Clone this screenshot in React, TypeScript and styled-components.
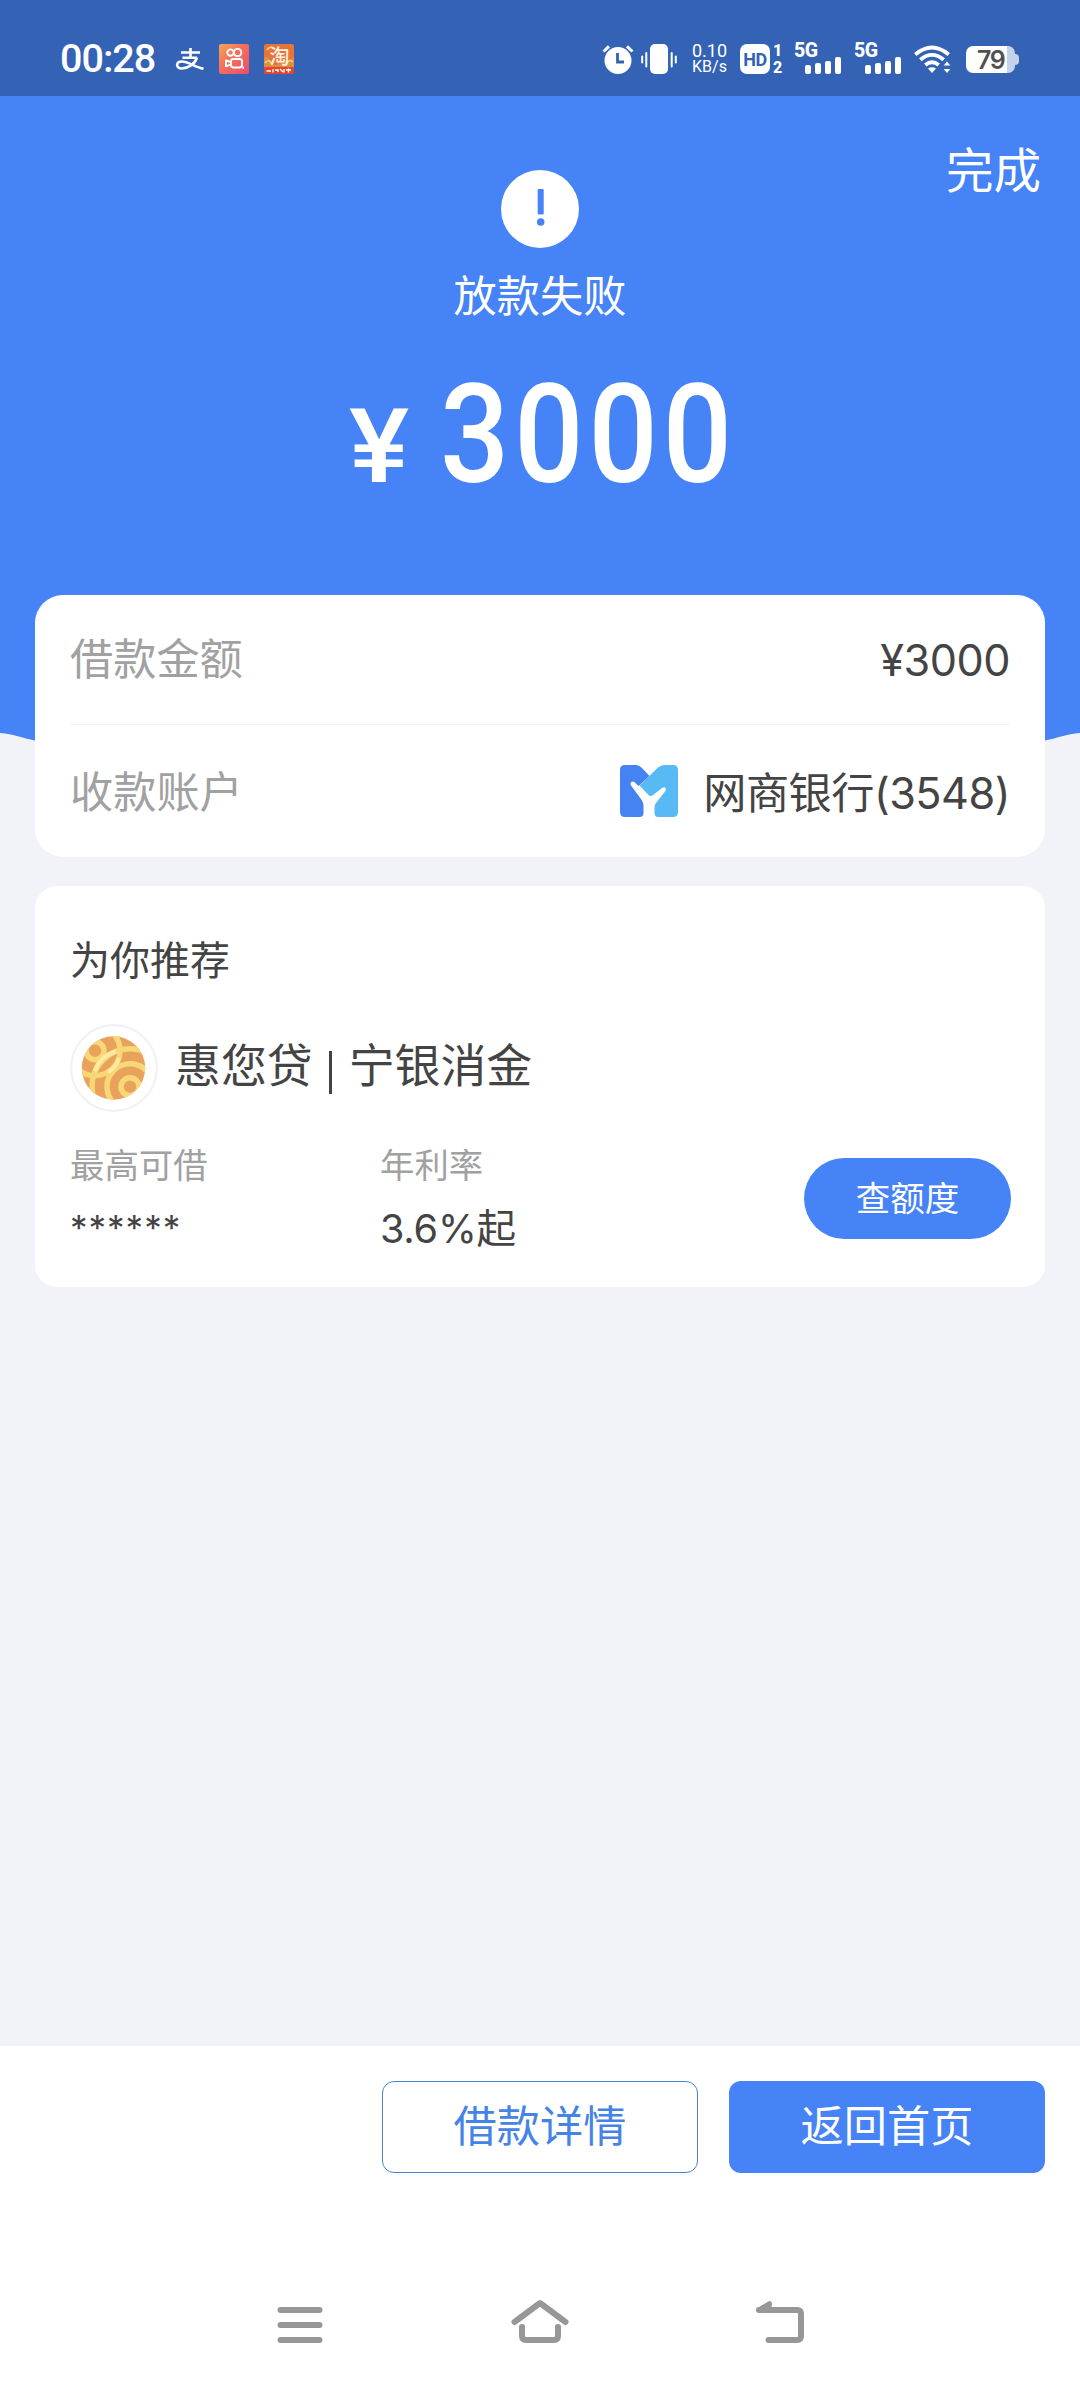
import React from "react";
import styled, { createGlobalStyle } from "styled-components";

const BLUE = "#4583f6";
const STATUS = "#3462b5";
const INK = "#444444";
const MUTED = "#a1a1a1";

const GlobalStyle = createGlobalStyle`
  * { box-sizing: border-box; }
  body {
    margin: 0;
    background: #f2f3f8;
    font-family: Inter, "Noto Sans CJK SC", sans-serif;
    color: ${INK};
  }
  svg { display: block; flex: none; overflow: visible; }
`;

const Screen = styled.div`
  width: 1080px;
  height: 2388px;
  display: flex;
  flex-direction: column;
  background: #f2f3f8;
  overflow: hidden;
`;

const StatusBar = styled.header`
  height: 96px;
  flex: none;
  display: flex;
  justify-content: space-between;
  background: ${STATUS};
  color: #fff;
  padding: 0 61px 0 60px;
`;

const StatusGroup = styled.div`
  display: flex;
  align-items: center;
  padding-top: 22px;
`;

const Clock = styled.span`
  width: 100px;
  font: 500 39.5px/44px Roboto, sans-serif;
  letter-spacing: -1px;
`;

const AppIcons = styled.div`
  display: flex;
  align-items: center;
  gap: 15px;
  margin-left: 16px;
`;

const Speed = styled.div`
  width: 37px;
  display: flex;
  flex-direction: column;
  align-items: center;
  font: 400 18px/16px Roboto, sans-serif;
  white-space: nowrap;
`;

const SpeedUnit = styled.span`
  font-size: 16px;
  line-height: 16px;
`;

const Hd = styled.div`
  display: flex;
  gap: 2px;
`;

const HdBox = styled.div`
  width: 30px;
  height: 30px;
  border-radius: 7px;
  background: #fff;
  color: ${STATUS};
  text-align: center;
  font: 700 18px/31px Roboto, sans-serif;
  letter-spacing: -0.5px;
`;

const HdSims = styled.div`
  width: 11px;
  height: 30px;
  display: flex;
  flex-direction: column;
  align-items: center;
  justify-content: center;
  font: 800 16px/17px Roboto, sans-serif;
`;

const SignalBox = styled.div`
  width: 48px;
  height: 30px;
  display: flex;
  flex-direction: column;
`;

const SignalLabel = styled.span`
  height: 13px;
  font: 800 19.5px/14px Roboto, sans-serif;
  letter-spacing: -0.4px;
`;

const Bars = styled.div`
  display: flex;
  align-items: flex-end;
  align-self: flex-end;
  height: 17px;
  gap: 4px;
  padding-right: 1px;
`;

const Bar = styled.i<{ $h: number }>`
  width: 6px;
  height: ${(p) => p.$h}px;
  border-radius: 2px;
  background: #fff;
`;

const Battery = styled.div`
  display: flex;
  align-items: center;
`;

const BatteryBody = styled.div`
  width: 49px;
  height: 27px;
  border-radius: 7px;
  background: linear-gradient(90deg, #fff 41px, #c4d2ea 41px);
  color: #505050;
  font: 600 25px/28px Inter, sans-serif;
  letter-spacing: -1.5px;
  padding-left: 11px;
`;

const BatteryTip = styled.i`
  width: 4px;
  height: 11px;
  border-radius: 0 4px 4px 0;
  background: #c4d2ea;
`;

const Hero = styled.section`
  height: 637px;
  flex: none;
  display: flex;
  flex-direction: column;
  align-items: center;
  background: ${BLUE};
  color: #fff;
`;

const HeroTop = styled.div`
  width: 100%;
  height: 152px;
  display: grid;
  grid-template-columns: 1fr 78px 1fr;
  padding: 0 39px;
`;

const Alert = styled.div`
  grid-column: 2;
  padding-top: 74px;
`;

const Done = styled.button`
  justify-self: end;
  align-self: start;
  margin: 45px 0 0;
  padding: 0;
  border: 0;
  background: none;
  color: inherit;
  font: 400 47.5px/60px Inter, "Noto Sans CJK SC", sans-serif;
`;

const HeroTitle = styled.h1`
  margin: 18px 0 0;
  font-size: 43.2px;
  line-height: 60px;
  font-weight: 400;
`;

const Amount = styled.div`
  display: flex;
  align-items: baseline;
  justify-content: center;
  margin-top: 39px;
  height: 140px;
  font-family: Roboto, sans-serif;
  font-weight: 500;
  line-height: 140px;
`;

const Currency = styled.span`
  width: 62px;
  font-size: 103px;
  margin-right: 29px;
  transform: scaleX(1.1);
  transform-origin: 0 50%;
`;

const Figure = styled.span`
  width: 292px;
  font-size: 137px;
  letter-spacing: 5.6px;
  transform: scaleX(0.89);
  transform-origin: 0 50%;
  white-space: nowrap;
`;

const Curve = styled.svg`
  margin-bottom: -168px;
`;

const Cards = styled.main`
  position: relative;
  flex: 1;
  display: flex;
  flex-direction: column;
  gap: 29px;
  padding: 0 35px;
`;

const Card = styled.section<{ $radius: number }>`
  background: #fff;
  border-radius: ${(p) => p.$radius}px;
  padding: 0 35px;
`;

const Row = styled.div<{ $h: number; $shift: number }>`
  height: ${(p) => p.$h}px;
  display: flex;
  align-items: center;
  justify-content: space-between;
  padding-top: ${(p) => p.$shift}px;
  font-size: 43.2px;
  line-height: 60px;
  & + & {
    border-top: 1px solid #eeeff2;
  }
`;

const Label = styled.span`
  color: ${MUTED};
  margin-top: -2px;
`;

const Value = styled.span`
  display: flex;
  align-items: center;
  gap: 25px;
  letter-spacing: -0.5px;
  white-space: nowrap;
`;

const BankMark = styled.svg`
  margin-top: -3px;
`;

const SectionTitle = styled.h2`
  margin: 0;
  padding-top: 49px;
  font-size: 40px;
  line-height: 52px;
  font-weight: 400;
`;

const Product = styled.div`
  display: flex;
  align-items: center;
  gap: 17px;
  margin-top: 37px;
`;

const ProductName = styled.span`
  font-size: 45.9px;
  line-height: 60px;
  margin-top: -5px;
  white-space: nowrap;
`;

const Pipe = styled.i`
  display: inline-block;
  width: 3px;
  height: 43px;
  margin: 0 17px 0 16px;
  vertical-align: -12px;
  background: ${INK};
`;

const Offer = styled.div`
  display: grid;
  grid-template-columns: 310px 1fr 207px;
  align-items: center;
  margin-top: 30px;
  padding-bottom: 32px;
  margin-right: -1px;
`;

const Stat = styled.div`
  display: flex;
  flex-direction: column;
`;

const StatLabel = styled.span`
  color: ${MUTED};
  font-size: 34.4px;
  line-height: 48px;
`;

const StatValue = styled.span<{ $stars?: boolean }>`
  font-size: ${(p) => (p.$stars ? 35 : 39.6)}px;
  line-height: ${(p) => (p.$stars ? 50 : 52)}px;
  margin-top: 13px;
  letter-spacing: ${(p) => (p.$stars ? "1px" : "-0.2px")};
  height: 52px;
`;

const Check = styled.button`
  height: 81px;
  padding: 0;
  border: 0;
  border-radius: 41px;
  background: ${BLUE};
  color: #fff;
  font: 400 34.5px/81px Inter, "Noto Sans CJK SC", sans-serif;
`;

const Footer = styled.footer`
  height: 216px;
  flex: none;
  display: flex;
  justify-content: flex-end;
  gap: 31px;
  padding: 35px 35px 0;
  background: #fff;
`;

const Action = styled.button<{ $primary?: boolean }>`
  width: 316px;
  height: 92px;
  padding: 0 0 2px;
  border-radius: 12px;
  border: ${(p) => (p.$primary ? "0" : "1px solid #4a82cf")};
  background: ${(p) => (p.$primary ? BLUE : "#fff")};
  color: ${(p) => (p.$primary ? "#fff" : "#4583e6")};
  font: 400 43.2px/60px Inter, "Noto Sans CJK SC", sans-serif;
`;

const NavBar = styled.nav`
  height: 126px;
  flex: none;
  display: grid;
  grid-template-columns: repeat(3, 240px);
  justify-content: center;
  justify-items: center;
  padding-top: 33px;
  background: #fff;
`;

const Spacer = styled.i<{ $w: number }>`
  width: ${(p) => p.$w}px;
  flex: none;
`;

function AlipayIcon() {
  return (
    <svg width="28" height="30" viewBox="0 0 28 30" fill="none" stroke="#fff" strokeWidth="2.6">
      <path d="M5 8.500H24M14.500 4V14M6.500 13.800H21" />
      <path d="M21 13.500C19 20 12 24.500 6 24.500C-.5 24.500-.5 17.500 6 17.500C12 17.500 19 23 27.500 24.800" />
    </svg>
  );
}

function KuaishouIcon() {
  return (
    <svg width="30" height="30" viewBox="0 0 30 30">
      <defs>
        <linearGradient id="ks" x1="0" y1="0" x2="1" y2="1">
          <stop offset="0" stopColor="#f5a35a" />
          <stop offset=".45" stopColor="#f3705c" />
          <stop offset="1" stopColor="#ec4c6c" />
        </linearGradient>
      </defs>
      <rect width="30" height="30" rx="2" fill="url(#ks)" />
      <g fill="none" stroke="#fff" strokeWidth="1.9">
        <circle cx="11.5" cy="8.6" r="3.2" />
        <circle cx="18.6" cy="8.6" r="3.7" />
        <rect x="12" y="15" width="11" height="8.5" rx="2.4" />
        <path d="M11.500 18L7 16.300V22.300L11.500 20.600" strokeLinejoin="round" />
      </g>
      <path d="M24.500 22.500L24 25" stroke="#fff" strokeWidth="1.4" />
    </svg>
  );
}

function TaobaoIcon() {
  return (
    <svg width="30" height="30" viewBox="0 0 30 30">
      <rect width="30" height="30" rx="2" fill="#e8733a" />
      <path d="M0 14Q5 11 7 17T14 20T22 17T30 13V24H0Z" fill="#d9913f" />
      <path d="M1 19Q5 14 8 20M22 21Q25 14 29 18M3 6Q5 3 8 3" stroke="#f8cf7c" strokeWidth="1.5" fill="none" />
      <rect y="23" width="30" height="7" rx="1" fill="#e5452f" />
      <text x="15.500" y="19.500" fontSize="20" fontWeight="500" fill="#fff3e2" textAnchor="middle" fontFamily="Noto Sans CJK SC">淘</text>
      <path d="M2.500 27H7M9 25V28.500M11 26H14V28M16 25L19 28M20 25V28.500M22 26H27M24.500 24.500V28.500" stroke="#fff" strokeWidth="1.300" fill="none" />
    </svg>
  );
}

function AlarmIcon() {
  return (
    <svg width="32" height="30" viewBox="0 0 32 30">
      <circle cx="16" cy="16.500" r="13.500" fill="#fff" />
      <path d="M1.500 7.500L7 2.300M25 2.300L30.500 7.500" stroke="#fff" strokeWidth="3" />
      <path d="M15.500 9V18H22" stroke={STATUS} strokeWidth="2.800" fill="none" />
    </svg>
  );
}

function VibrateIcon() {
  return (
    <svg width="36" height="30" viewBox="0 0 36 30" fill="#fff">
      <rect x="9" width="18" height="30" rx="5" />
      <path d="M1.200 12.500V18.500M5.300 9V22.500M30.700 9V22.500M34.800 12.500V18.500" stroke="#fff" strokeWidth="2" strokeLinecap="round" />
    </svg>
  );
}

function WifiIcon() {
  return (
    <svg width="36" height="30" viewBox="0 0 36 30">
      <g fill="none" stroke="#fff" strokeWidth="3.800">
        <path d="M1.300 10.500Q18-3.500 34.700 10.500" />
        <path d="M6.300 15.800Q18 6 29.700 15.800" />
        <path d="M11.300 21Q18 15.500 24.700 21" />
      </g>
      <path d="M14 24.500Q18 22 22 24.500L18 29Z" fill="#fff" />
      <path d="M29.700 21.500L33 17.500L36.300 21.500ZM29.700 25H36.300L33 29Z" fill="#fff" />
    </svg>
  );
}

function Signal() {
  return (
    <SignalBox>
      <SignalLabel>5G</SignalLabel>
      <Bars>
        {[9, 11, 13.5, 17].map((h) => (
          <Bar key={h} $h={h} />
        ))}
      </Bars>
    </SignalBox>
  );
}

function AlertIcon() {
  return (
    <svg width="78" height="78" viewBox="0 0 78 78">
      <circle cx="39" cy="39" r="39" fill="#fff" />
      <rect x="36.700" y="19" width="6" height="25.500" rx="1" fill={BLUE} />
      <circle cx="39.700" cy="52" r="3.800" fill={BLUE} />
    </svg>
  );
}

function BankLogo() {
  return (
    <BankMark width="58" height="52" viewBox="0 0 58 52">
      <path d="M5 0H16Q19 0 22 3L29.500 11L18.500 21L15 17.500Q12.500 15.500 10.500 18Q10 19 11 20.500L21 34Q23.500 37.500 23.500 41V48Q23.500 52 19.500 52H5Q0 52 0 47V5Q0 0 5 0Z" fill="#4583f2" />
      <path d="M53 0H44Q41 0 38 2.500L19.500 20.500L29 30.500Q31 31.500 33 30L42 23Q44 21.500 45.500 23Q46.500 24.500 45 26.500L37.500 36Q34.500 39 34.500 42V48Q34.500 52 38.500 52H53Q58 52 58 47V5Q58 0 53 0Z" fill="#58baf4" />
    </BankMark>
  );
}

function ProductLogo() {
  return (
    <svg width="88" height="88" viewBox="0 0 88 88" fill="none">
      <defs>
        <clipPath id="ball">
          <circle cx="43.500" cy="44" r="31.700" />
        </clipPath>
      </defs>
      <circle cx="44" cy="44" r="42.800" fill="#fff" stroke="#f2f2f6" strokeWidth="2.200" />
      <g clipPath="url(#ball)">
        <rect x="10" y="10" width="68" height="68" fill="#e9a25c" />
        <g stroke="#f8d777" strokeWidth="5.500">
          <circle cx="25" cy="26.700" r="9" />
          <circle cx="25" cy="26.700" r="25" />
          <circle cx="60" cy="62.700" r="9" />
          <circle cx="60" cy="62.700" r="23" />
          <circle cx="60" cy="62.700" r="38" />
        </g>
        <path d="M24.500 47Q30 32 46 27.500M38 48Q46 44 49 34" stroke="#fbeaa0" strokeWidth="4" />
      </g>
    </svg>
  );
}

const navStroke = {
  fill: "none",
  stroke: "#979797",
  strokeWidth: 6,
  strokeLinecap: "round" as const,
  strokeLinejoin: "round" as const,
};

function MenuIcon() {
  return (
    <svg width="60" height="60" viewBox="0 0 60 60" {...navStroke}>
      <path d="M10.500 15H49.500M10.500 30H49.500M10.500 45H49.500" />
    </svg>
  );
}

function HomeIcon() {
  return (
    <svg width="60" height="60" viewBox="0 0 60 60" {...navStroke}>
      <path d="M4.500 27L30 8L55.500 27" />
      <path d="M12 32V41Q12 45 16 45H44Q48 45 48 41V32" />
    </svg>
  );
}

function BackIcon() {
  return (
    <svg width="60" height="60" viewBox="0 0 60 60" {...navStroke}>
      <path d="M18.500 45H47Q51 45 51 41V19Q51 15 47 15H9" />
      <path d="M9 15L19.500 8.700L18.500 15Z" fill="#979797" strokeWidth="5" />
    </svg>
  );
}

export default function App() {
  return (
    <>
      <GlobalStyle />
      <Screen>
        <StatusBar>
          <StatusGroup>
            <Clock>00:28</Clock>
            <AppIcons>
              <AlipayIcon />
              <KuaishouIcon />
              <TaobaoIcon />
            </AppIcons>
          </StatusGroup>
          <StatusGroup>
            <AlarmIcon />
            <Spacer $w={7} />
            <VibrateIcon />
            <Spacer $w={14} />
            <Speed>
              <span>0.10</span>
              <SpeedUnit>KB/s</SpeedUnit>
            </Speed>
            <Spacer $w={12} />
            <Hd>
              <HdBox>HD</HdBox>
              <HdSims>
                <span>1</span>
                <span>2</span>
              </HdSims>
            </Hd>
            <Spacer $w={11} />
            <Signal />
            <Spacer $w={12} />
            <Signal />
            <Spacer $w={12} />
            <WifiIcon />
            <Spacer $w={16} />
            <Battery>
              <BatteryBody>79</BatteryBody>
              <BatteryTip />
            </Battery>
          </StatusGroup>
        </StatusBar>

        <Hero>
          <HeroTop>
            <Alert>
              <AlertIcon />
            </Alert>
            <Done>完成</Done>
          </HeroTop>
          <HeroTitle>放款失败</HeroTitle>
          <Amount>
            <Currency>¥</Currency>
            <Figure>3000</Figure>
          </Amount>
        </Hero>
        <Curve width="1080" height="30" viewBox="0 0 1080 30">
          <path d="M0 0C14 1 22 5 35 7.500L140 30H940L1045 7.500C1058 5 1066 1 1080 0Z" fill={BLUE} />
        </Curve>

        <Cards>
          <Card $radius={28}>
            <Row $h={129} $shift={0}>
              <Label>借款金额</Label>
              <Value>¥3000</Value>
            </Row>
            <Row $h={133} $shift={3}>
              <Label>收款账户</Label>
              <Value>
                <BankLogo />
                <span>网商银行(3548)</span>
              </Value>
            </Row>
          </Card>
          <Card $radius={22}>
            <SectionTitle>为你推荐</SectionTitle>
            <Product>
              <ProductLogo />
              <ProductName>
                惠您贷
                <Pipe />
                宁银消金
              </ProductName>
            </Product>
            <Offer>
              <Stat>
                <StatLabel>最高可借</StatLabel>
                <StatValue $stars>******</StatValue>
              </Stat>
              <Stat>
                <StatLabel>年利率</StatLabel>
                <StatValue>3.6%起</StatValue>
              </Stat>
              <Check>查额度</Check>
            </Offer>
          </Card>
        </Cards>

        <Footer>
          <Action>借款详情</Action>
          <Action $primary>返回首页</Action>
        </Footer>
        <NavBar>
          <MenuIcon />
          <HomeIcon />
          <BackIcon />
        </NavBar>
      </Screen>
    </>
  );
}
